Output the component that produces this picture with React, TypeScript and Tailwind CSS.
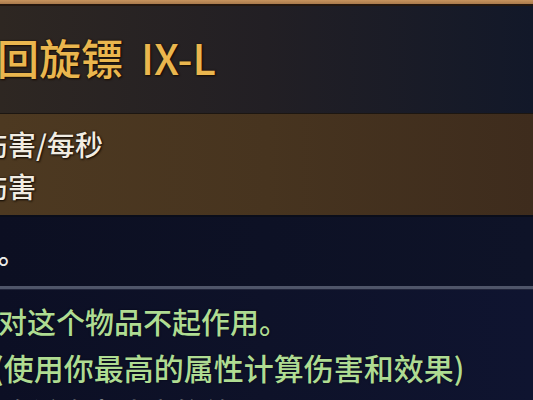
import React from 'react';

const cjk = { fontFamily: '"Noto Sans CJK SC", "Noto Sans", sans-serif' };

export default function App() {
  return (
    <div className="w-[533px] h-[400px] overflow-hidden bg-[#0c1024] flex flex-col" style={cjk}>
      {/* top gold trim */}
      <div className="h-[4px] bg-gradient-to-b from-[#c7945e] to-[#a97a4c] shrink-0" />
      <div className="h-[2px] bg-[#24170f] shrink-0" />

      {/* title header */}
      <div className="h-[107px] shrink-0 flex items-center bg-gradient-to-r from-[#2e2722] via-[#221f24] to-[#121829]">
        <h1 className="text-[42px] font-medium leading-none text-[#eab64e] -ml-[3px] -mt-[6px] whitespace-nowrap [text-shadow:0_0_2px_#1a0e04,1px_1px_2px_#1a0e04]">
          回旋镖<span className="ml-[18px]">IX-L</span>
        </h1>
      </div>

      {/* stats band */}
      <div className="h-[102px] shrink-0 border-t border-[#1c1611] flex flex-col justify-center bg-gradient-to-r from-[#4d3921] via-[#47341f] to-[#3e2c1d]">
        <p className="text-[28px] font-medium leading-[42px] text-[#f1ece2] -ml-[20px] whitespace-nowrap [text-shadow:0_0_2px_#150d06,1px_1px_2px_#150d06]">
          伤害/每秒
        </p>
        <p className="text-[28px] font-medium leading-[42px] text-[#f1ece2] -ml-[20px] whitespace-nowrap [text-shadow:0_0_2px_#150d06,1px_1px_2px_#150d06]">
          伤害
        </p>
      </div>

      {/* description */}
      <div className="h-[71px] shrink-0 border-t-2 border-[#0a0d1a] bg-gradient-to-r from-[#0c0f22] to-[#0e1328] flex items-center">
        <p className="text-[28px] font-medium leading-none text-[#ecebea] -ml-[2px] whitespace-nowrap">。</p>
      </div>

      {/* separator */}
      <div className="h-[4px] shrink-0 bg-[#4f5569] border-b border-[#20243a]" />

      {/* requirement notes */}
      <div className="flex-1 bg-gradient-to-r from-[#0c0f24] via-[#0e1229] to-[#0f1430] pt-[8px]">
        <p className="text-[29px] font-medium leading-[46px] text-[#afdc92] -ml-[2px] whitespace-nowrap [text-shadow:0_0_2px_#050814]">
          对这个物品不起作用。
        </p>
        <p className="text-[30px] font-medium leading-[46px] text-[#afdc92] -ml-[7px] whitespace-nowrap [text-shadow:0_0_2px_#050814]">
          (使用你最高的属性计算伤害和效果)
        </p>
        <p className="text-[29px] font-medium leading-[46px] text-[#c9cfc4] -mt-[1px] whitespace-nowrap">
          降低攻击速度的效果
        </p>
      </div>
    </div>
  );
}
